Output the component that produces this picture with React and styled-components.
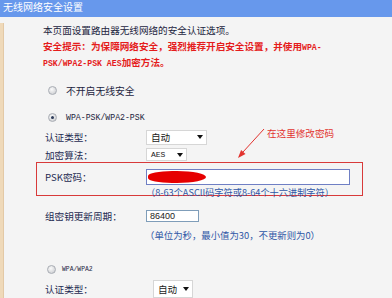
import React from "react";
import styled, { createGlobalStyle } from "styled-components";

const GlobalStyle = createGlobalStyle`
  html, body { margin: 0; padding: 0; }
  body {
    background: #f4f4f4;
    font-family: "Noto Sans CJK SC", "Noto Sans", sans-serif;
  }
`;

const Page = styled.div`
  position: relative;
  width: 392px;
  height: 298px;
  overflow: hidden;
  background: #f4f4f4;
`;

const Header = styled.div`
  height: 17px;
  padding-left: 3px;
  background: #6798ec;
  color: #fff;
  font-size: 10px;
  line-height: 14px;
`;

const Body = styled.div`
  height: 281px;
  border-left: 3px solid #efd9b9;
  box-shadow: inset 1px 0 0 #e3c9a6;
  padding-left: 1px;
`;

const Intro = styled.div`
  margin-top: 6px;
  padding-left: 39px;
  font-size: 9.6px;
  line-height: 15.5px;
  color: #1c2440;
`;

const Warn = styled.div`
  color: #e51c1c;
  font-weight: 700;
`;

const Latin = styled.span`
  font-family: "Liberation Mono", monospace;
  font-size: ${(p) => p.size || 8}px;
  font-weight: ${(p) => (p.bold ? 700 : 400)};
`;

const RadioRow = styled.div`
  display: flex;
  align-items: center;
  height: 14px;
  margin-top: ${(p) => p.top}px;
  padding-left: ${(p) => p.left || 44}px;
  gap: ${(p) => p.gap || 9}px;
  font-size: 9.8px;
  color: #1c2440;
`;

const Radio = styled.span`
  box-sizing: border-box;
  width: 9px;
  height: 9px;
  border-radius: 50%;
  border: 1px solid #a9adb4;
  background: radial-gradient(circle at 40% 35%, #fbfbfb, #c4c6ca);
  display: flex;
  align-items: center;
  justify-content: center;
  &::after {
    content: "";
    width: 3px;
    height: 3px;
    border-radius: 50%;
    background: ${(p) => (p.checked ? "#2c3a58" : "transparent")};
  }
`;

const FormRow = styled.div`
  display: grid;
  grid-template-columns: 101px auto;
  align-items: center;
  height: ${(p) => p.h}px;
  margin-top: ${(p) => p.top}px;
  padding-left: ${(p) => (p.boxed ? 0 : 41)}px;
`;

const Label = styled.span`
  font-size: 9.6px;
  color: #1e2a52;
`;

const Select = styled.div`
  box-sizing: border-box;
  display: flex;
  align-items: center;
  justify-content: space-between;
  width: ${(p) => p.w}px;
  height: ${(p) => p.h}px;
  margin-left: ${(p) => p.offset || 0}px;
  padding: 0 3px 0 4px;
  background: #fff;
  border: 1px solid #d6d6d6;
  font-size: ${(p) => (p.latin ? 8 : 9.6)}px;
  font-family: ${(p) =>
    p.latin ? `"Liberation Mono", monospace` : `"Noto Sans CJK SC", sans-serif`};
  color: #1a1a1a;
`;

const Caret = () => (
  <svg width="6" height="4" viewBox="0 0 6 4">
    <path d="M0 0 H6 L3 4 Z" fill="#111" />
  </svg>
);

const PskBox = styled.div`
  margin: 2px 0 0 32px;
  width: 327px;
  box-sizing: border-box;
  height: 34px;
  border: 1px solid #d83a3a;
  padding: 6px 0 0 8px;
`;

const TextInput = styled.div`
  position: relative;
  box-sizing: border-box;
  width: ${(p) => p.w}px;
  height: ${(p) => p.h}px;
  background: #fff;
  border: 1px solid ${(p) => p.border || "#7f9db9"};
  font-family: "Liberation Sans", Arial, sans-serif;
  font-size: 9px;
  line-height: ${(p) => p.h - 2}px;
  padding-left: 3px;
  color: #222;
`;

const Redact = styled.span`
  position: absolute;
  left: 1px;
  top: 1px;
  width: 58px;
  height: 12px;
  border-radius: 50% 60% 60% 50%;
  background: #e60000;
`;

const Hint = styled.div`
  margin: ${(p) => p.top}px 0 0 ${(p) => p.left}px;
  font-size: ${(p) => p.size || 9.2}px;
  line-height: 12px;
  color: #2f57a6;
  white-space: nowrap;
`;

const Note = styled.div`
  position: absolute;
  left: 267px;
  top: 127px;
  font-size: 9.6px;
  line-height: 12px;
  color: #e2332f;
`;

const Arrow = styled.svg`
  position: absolute;
  left: 230px;
  top: 120px;
`;

export default function App() {
  return (
    <>
      <GlobalStyle />
      <Page>
        <Header>无线网络安全设置</Header>
        <Body>
          <Intro>
            <div>本页面设置路由器无线网络的安全认证选项。</div>
            <Warn>
              安全提示：为保障网络安全，强烈推荐开启安全设置，并使用<Latin size={8.2} bold>WPA-</Latin>
            </Warn>
            <Warn>
              <Latin size={8.2} bold>PSK/WPA2-PSK AES</Latin>加密方法。
            </Warn>
          </Intro>

          <RadioRow top={12}>
            <Radio />
            不开启无线安全
          </RadioRow>
          <RadioRow top={13}>
            <Radio checked />
            <Latin size={8.2}>WPA-PSK/WPA2-PSK</Latin>
          </RadioRow>

          <FormRow top={5} h={14}>
            <Label>认证类型：</Label>
            <Select w={61} h={15}>
              自动 <Caret />
            </Select>
          </FormRow>
          <FormRow top={4} h={12}>
            <Label>加密算法：</Label>
            <Select w={41} h={13} latin>
              AES <Caret />
            </Select>
          </FormRow>

          <PskBox>
            <FormRow top={0} h={16} boxed>
              <Label>PSK密码：</Label>
              <TextInput w={204} h={16} border="#6f7fc4">
                <Redact />
              </TextInput>
            </FormRow>
            <Hint top={1} left={101}>
              （8-63个ASCII码字符或8-64个十六进制字符）
            </Hint>
          </PskBox>

          <FormRow top={13} h={12}>
            <Label>组密钥更新周期：</Label>
            <TextInput w={53} h={12}>
              86400
            </TextInput>
          </FormRow>
          <Hint top={8} left={141} size={9.4}>
            （单位为秒，最小值为30，不更新则为0）
          </Hint>

          <RadioRow top={22} left={43} gap={6}>
            <Radio />
            <Latin size={6.4}>WPA/WPA2</Latin>
          </RadioRow>
          <FormRow top={3} h={18}>
            <Label>认证类型：</Label>
            <Select w={40} h={18} offset={7}>
              自动 <Caret />
            </Select>
          </FormRow>
        </Body>

        <Note>在这里修改密码</Note>
        <Arrow width="40" height="45" viewBox="0 0 40 45">
          <line x1="34" y1="9" x2="13" y2="32" stroke="#e2332f" strokeWidth="1" />
          <path d="M8 38 L15.5 34 L11.1 30 Z" fill="#e2332f" />
        </Arrow>
      </Page>
    </>
  );
}
